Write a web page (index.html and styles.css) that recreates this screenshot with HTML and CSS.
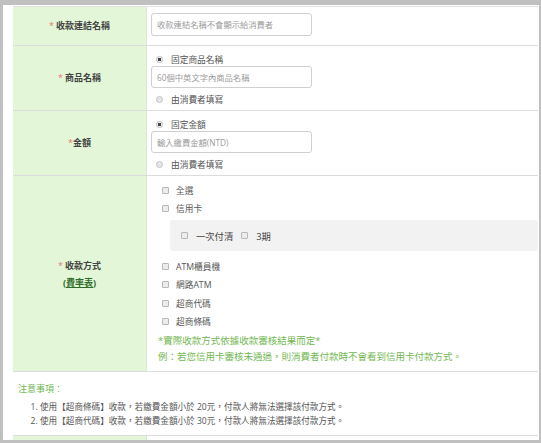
FILE: index.html
```html
<!DOCTYPE html>
<html lang="zh-Hant">
<head>
<meta charset="utf-8">
<title>收款連結</title>
<link rel="stylesheet" href="styles.css">
</head>
<body>
<div class="panel">
  <div class="table">
    <div class="row">
      <div class="label"><span class="req">*</span>收款連結名稱</div>
      <div class="field f-name">
        <input class="inp" type="text" placeholder="收款連結名稱不會顯示給消費者">
      </div>
    </div>
    <div class="row">
      <div class="label"><span class="req">*</span>商品名稱</div>
      <div class="field f-choice">
        <div class="opt"><span class="radio on"></span>固定商品名稱</div>
        <input class="inp" type="text" placeholder="60個中英文字內商品名稱">
        <div class="opt opt2"><span class="radio"></span>由消費者填寫</div>
      </div>
    </div>
    <div class="row">
      <div class="label"><span class="req tight">*</span>金額</div>
      <div class="field f-choice">
        <div class="opt"><span class="radio on"></span>固定金額</div>
        <input class="inp" type="text" placeholder="輸入繳費金額(NTD)">
        <div class="opt opt2"><span class="radio"></span>由消費者填寫</div>
      </div>
    </div>
    <div class="row">
      <div class="label label-stack">
        <div><span class="req">*</span>收款方式</div>
        <a class="rate" href="#">(費率表)</a>
      </div>
      <div class="field f-pay">
        <div class="chk"><span class="box"></span>全選</div>
        <div class="chk"><span class="box"></span>信用卡</div>
        <div class="subbox">
          <span class="box"></span><span class="sublbl">一次付清</span>
          <span class="box"></span><span class="sublbl">3期</span>
        </div>
        <div class="chk chk-gap"><span class="box"></span>ATM櫃員機</div>
        <div class="chk"><span class="box"></span>網路ATM</div>
        <div class="chk"><span class="box"></span>超商代碼</div>
        <div class="chk"><span class="box"></span>超商條碼</div>
        <p class="hint">*實際收款方式依據收款審核結果而定*</p>
        <p class="hint">例：若您信用卡審核未通過，則消費者付款時不會看到信用卡付款方式。</p>
      </div>
    </div>
    <div class="notes">
      <div class="notes-title">注意事項：</div>
      <ol class="notes-list">
        <li>使用【超商條碼】收款，若繳費金額小於 20元，付款人將無法選擇該付款方式。</li>
        <li>使用【超商代碼】收款，若繳費金額小於 30元，付款人將無法選擇該付款方式。</li>
      </ol>
    </div>
    <div class="row">
      <div class="label label-empty"></div>
      <div class="field"></div>
    </div>
  </div>
</div>
</body>
</html>
```
FILE: styles.css
```css
html, body {
  margin: 0;
  padding: 0;
}
body {
  background: #c0c0c0;
  font-family: "Open Sans", "Noto Sans CJK TC", sans-serif;
  color: #555;
}
.panel {
  margin: 5px 2px 0 3px;
  height: 435px;
  background: #fff;
  overflow: hidden;
  padding-top: 1px;
  box-sizing: border-box;
}
.table {
  margin-left: 10px;
  width: 525px;
  border-top: 1px solid #e2e2e2;
}
.row {
  display: grid;
  grid-template-columns: 134px 1fr;
  border-bottom: 1px solid #dcdcdc;
}
.label {
  background: #e3f7d8;
  border-right: 1px solid #d9e8d0;
  display: flex;
  align-items: center;
  justify-content: center;
  font-size: 9px;
  line-height: 14px;
  font-weight: bold;
  color: #444;
}
.label-stack {
  flex-direction: column;
  line-height: 17px;
}
.label-empty {
  min-height: 12px;
}
.req {
  color: #e8776f;
  font-weight: normal;
  margin-right: 2px;
}
.req.tight {
  margin-right: 0;
}
.rate {
  color: #2e6b2a;
  text-decoration: underline;
}
.field {
  padding-left: 4px;
}
.f-name {
  padding-top: 6px;
  padding-bottom: 9px;
}
.inp {
  display: block;
  box-sizing: border-box;
  width: 161px;
  height: 22px;
  margin: 0;
  border: 1px solid #d0d0d0;
  border-radius: 3px;
  padding: 0 5px;
  font-family: "Open Sans", "Noto Sans CJK TC", sans-serif;
  font-size: 8.3px;
  color: #555;
  background: #fff;
}
.f-name .inp {
  height: 23px;
}
.inp::placeholder {
  color: #9a9a9a;
}
.f-choice {
  padding-top: 7px;
  padding-bottom: 4px;
}
.opt {
  display: flex;
  align-items: center;
  height: 13px;
  padding-left: 5px;
  font-size: 8.7px;
  color: #555;
}
.opt2 {
  height: 14px;
  margin-top: 4px;
}
.radio {
  box-sizing: border-box;
  width: 7px;
  height: 7px;
  border-radius: 50%;
  border: 1px solid #c4c4c4;
  background: #e6e6e6;
  margin-right: 8px;
  flex: none;
}
.radio.on {
  background: radial-gradient(circle, #444 0 1.6px, #f4f4f4 1.9px);
  border-color: #bdbdbd;
}
.f-pay {
  padding-top: 5px;
  padding-bottom: 6px;
  padding-left: 0;
}
.chk {
  display: flex;
  align-items: center;
  height: 18.5px;
  padding-left: 15px;
  font-size: 8.7px;
  color: #555;
}
.box {
  box-sizing: border-box;
  width: 7px;
  height: 7px;
  border: 1px solid #b8b8b8;
  border-radius: 1px;
  background: #ececec;
  margin-right: 7px;
  flex: none;
}
.subbox {
  margin: 2px 0 0 23px;
  height: 31px;
  background: #f2f2f2;
  border-radius: 3px;
  display: flex;
  align-items: center;
  padding-left: 11px;
  font-size: 9.3px;
  color: #444;
}
.subbox .box {
  margin-right: 8px;
}
.sublbl {
  margin-right: 8px;
}
.chk-gap {
  margin-top: 6px;
}
.hint {
  margin: 0;
  padding-left: 11px;
  font-size: 9.5px;
  line-height: 16px;
  color: #72b852;
}
.hint:first-of-type {
  margin-top: 2px;
}
.notes {
  border-bottom: 1px solid #dcdcdc;
  height: 64px;
  box-sizing: border-box;
  padding-top: 10px;
  padding-left: 5px;
}
.notes-title {
  font-size: 9px;
  line-height: 14px;
  color: #72b852;
}
.notes-list {
  margin: 4px 0 0 0;
  padding-left: 22px;
  font-size: 8.6px;
  line-height: 14px;
  color: #555;
}
```
